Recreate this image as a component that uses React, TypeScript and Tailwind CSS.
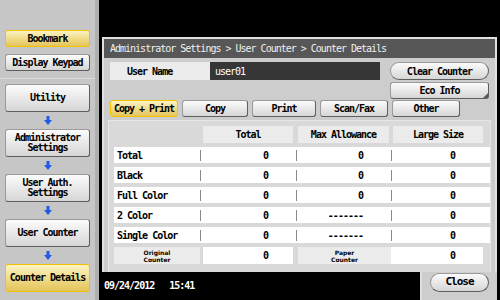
import React from 'react';

const btnGray =
  'bg-gradient-to-b from-[#fbfbfb] to-[#d6d6d6] border border-[#9a9a9a] border-b-[#5e5e5e] border-r-[#5e5e5e] rounded-[3px]';
const btnYellow =
  'bg-gradient-to-b from-[#fcf3c4] via-[#f1dc8a] to-[#e4c45c] border border-[#f2c200] rounded-[3px]';

const Arrow = () => (
  <div className="h-[13px] flex items-center justify-center">
    <svg width="8" height="9" viewBox="0 0 8 9">
      <rect x="2.5" y="0" width="3" height="4" fill="#1f5be6" />
      <polygon points="0,4 8,4 4,9" fill="#1f5be6" />
    </svg>
  </div>
);

const SideButton = ({ label, active, tall }: { label: React.ReactNode; active?: boolean; tall?: boolean }) => (
  <div
    className={`${active ? btnYellow : btnGray} ${tall ? 'h-[28px]' : 'h-[17px]'} flex items-center justify-center text-center leading-[10px] text-black`}
  >
    {label}
  </div>
);

const rows = [
  { label: 'Total', v: ['0', '0', '0'] },
  { label: 'Black', v: ['0', '0', '0'] },
  { label: 'Full Color', v: ['0', '0', '0'] },
  { label: '2 Color', v: ['0', '-------', '0'] },
  { label: 'Single Color', v: ['0', '-------', '0'] },
];

const Cell = ({ children }: { children: React.ReactNode }) => (
  <div className="flex items-center h-full">
    <span className="w-px h-[11px] bg-[#8a8a8a]" />
    <span className="flex-1 text-right pr-[28px]">{children}</span>
  </div>
);

export default function App() {
  return (
    <div className="w-[500px] h-[300px] flex bg-black font-['DejaVu_Sans_Mono',monospace] text-[10px] font-bold tracking-[-1px] overflow-hidden">
      {/* Sidebar */}
      <aside className="w-[99px] h-full bg-[#c6c6c6] border-r-[4px] border-[#b0b0b0] flex flex-col">
        <div className="px-[5px] pt-[30px] flex flex-col gap-[7px]">
          <SideButton label="Bookmark" active />
          <SideButton label="Display Keypad" />
        </div>
        <div className="mt-[7px] h-px bg-[#9a9a9a] border-b border-[#dadada]" />
        <div className="px-[5px] pt-[5px] flex flex-col gap-[2px]">
          <SideButton label="Utility" tall />
          <Arrow />
          <SideButton label={<>Administrator<br />Settings</>} tall />
          <Arrow />
          <SideButton label={<>User Auth.<br />Settings</>} tall />
          <Arrow />
          <SideButton label="User Counter" tall />
          <Arrow />
          <SideButton label="Counter Details" active tall />
        </div>
      </aside>

      {/* Main */}
      <main className="flex-1 flex flex-col">
        <div className="h-[37px]" />
        <section className="ml-[3px] w-[395px] h-[235px] bg-[#cdcdcd] border-2 border-[#e0e0e0] border-b-0 flex flex-col">
          <div className="h-[19px] bg-[#575757] text-[#f0f0f0] font-normal flex items-center pl-[6px]">
            Administrator Settings &gt; User Counter &gt; Counter Details
          </div>
          <div className="px-[6px] pt-[4px] flex flex-col">
            <div className="flex h-[18px] items-stretch">
              <div className="w-[100px] bg-[#ebebeb] flex items-center pl-[17px]">User Name</div>
              <div className="w-[170px] bg-[#363636] text-white font-normal flex items-center pl-[5px]">user01</div>
              <div className={`ml-auto w-[99px] ${btnGray} rounded-full flex items-center justify-center`}>
                Clear Counter
              </div>
            </div>
            <div className="flex h-[17px] mt-[2px]">
              <div className={`relative ml-auto w-[99px] ${btnGray} flex items-center justify-center`}>
                Eco Info
                <span className="absolute right-0 bottom-0 w-0 h-0 border-l-[5px] border-l-transparent border-b-[5px] border-b-[#5a5a5a]" />
              </div>
            </div>
            <div className="flex h-[17px] gap-[4px] mt-[1px]">
              <div className={`w-[68px] ${btnYellow} flex items-center justify-center`}>Copy + Print</div>
              <div className={`w-[66px] ${btnGray} flex items-center justify-center`}>Copy</div>
              <div className={`w-[64px] ${btnGray} flex items-center justify-center`}>Print</div>
              <div className={`w-[68px] ${btnGray} flex items-center justify-center`}>Scan/Fax</div>
              <div className={`w-[68px] ${btnGray} flex items-center justify-center`}>Other</div>
            </div>
          </div>

          {/* Table */}
          <div className="mx-[4px] mt-[3px] flex-1 bg-[#d9d9d9] border border-[#e6e6e6] border-b-0 pl-[5px] pt-[5px] flex flex-col gap-[4px]">
            <div className="grid grid-cols-[86px_96px_95px_92px] h-[17px]">
              <div />
              <div className="mx-[3px] bg-[#ebebeb] flex items-center justify-center">Total</div>
              <div className="mx-[2px] bg-[#ebebeb] flex items-center justify-center">Max Allowance</div>
              <div className="ml-[2px] bg-[#ebebeb] flex items-center justify-center">Large Size</div>
            </div>
            {rows.map((r) => (
              <div key={r.label} className="grid grid-cols-[86px_96px_95px_92px] h-[16px] bg-white">
                <div className="pl-[3px] flex items-center">{r.label}</div>
                <Cell>{r.v[0]}</Cell>
                <Cell>{r.v[1]}</Cell>
                <Cell>{r.v[2]}</Cell>
              </div>
            ))}
            <div className="grid grid-cols-[86px_96px_95px_92px] h-[17px]">
              <div className="bg-[#ebebeb] flex items-center justify-center text-center font-['DejaVu_Sans',sans-serif] font-bold text-[6px] leading-[7px] tracking-normal">
                Original<br />Counter
              </div>
              <div className="mx-[3px] bg-white flex items-center justify-end pr-[25px]">0</div>
              <div className="ml-[2px] bg-[#ebebeb] flex items-center justify-center text-center font-['DejaVu_Sans',sans-serif] font-bold text-[6px] leading-[7px] tracking-normal">
                Paper<br />Counter
              </div>
              <div className="bg-white flex items-center justify-end pr-[28px]">0</div>
            </div>
          </div>
        </section>
        <div className="flex-1 flex">
          <div className="flex-1 text-white flex items-center pl-[5px] gap-[15px] pb-[2px]">
            <span>09/24/2012</span>
            <span>15:41</span>
          </div>
          <div className="w-[77px] mr-[3px] bg-[#cdcdcd] border-l-2 border-[#e0e0e0] pl-[8px] pt-[1px]">
            <div className={`w-[59px] h-[19px] ${btnGray} rounded-full flex items-center justify-center text-[11px]`}>
              Close
            </div>
          </div>
        </div>
      </main>
    </div>
  );
}
